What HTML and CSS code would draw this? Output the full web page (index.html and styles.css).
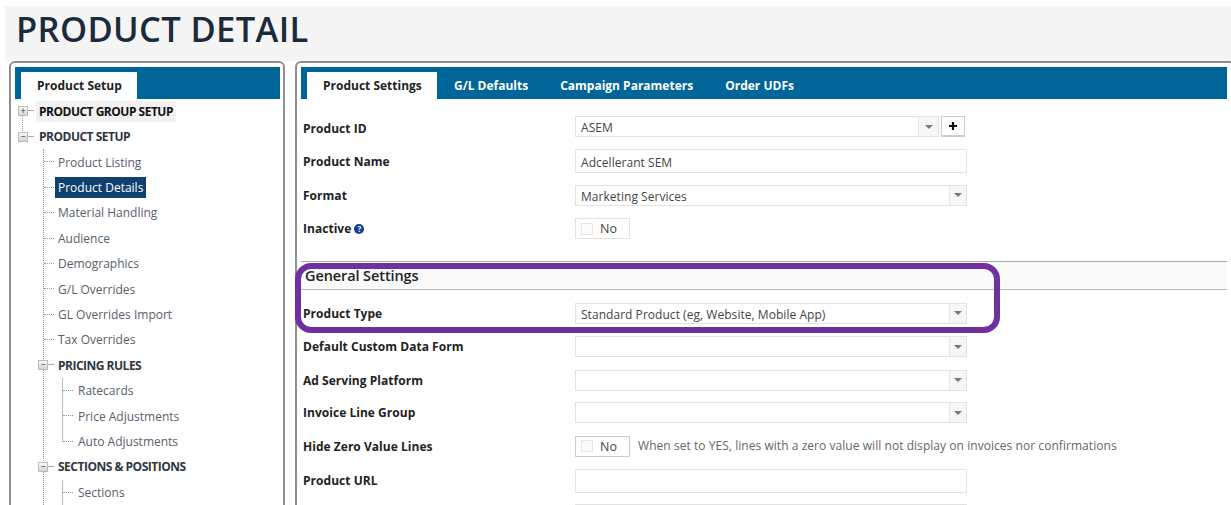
FILE: index.html
```html
<!DOCTYPE html>
<html lang="en">
<head>
<meta charset="utf-8">
<title>Product Detail</title>
<link rel="stylesheet" href="styles.css">
</head>
<body>
<div class="page">
  <header class="page-head"><h1>PRODUCT DETAIL</h1></header>
  <div class="columns">
    <aside class="panel side">
      <div class="tabbar"><span class="tab active side-tab">Product Setup</span></div>
      <ul class="tree root">
        <li class="node head hover"><span class="exp">+</span><span class="lbl">PRODUCT GROUP SETUP</span></li>
        <li class="node head"><span class="exp">−</span><span class="lbl">PRODUCT SETUP</span></li>
        <li>
          <ul class="tree level1">
            <li class="node leaf"><span class="lbl">Product Listing</span></li>
            <li class="node leaf"><span class="lbl selected">Product Details</span></li>
            <li class="node leaf"><span class="lbl">Material Handling</span></li>
            <li class="node leaf"><span class="lbl">Audience</span></li>
            <li class="node leaf"><span class="lbl">Demographics</span></li>
            <li class="node leaf"><span class="lbl">G/L Overrides</span></li>
            <li class="node leaf"><span class="lbl">GL Overrides Import</span></li>
            <li class="node leaf"><span class="lbl">Tax Overrides</span></li>
            <li class="node head sub"><span class="exp">−</span><span class="lbl">PRICING RULES</span></li>
            <li>
              <ul class="tree level2">
                <li class="node leaf"><span class="lbl">Ratecards</span></li>
                <li class="node leaf"><span class="lbl">Price Adjustments</span></li>
                <li class="node leaf"><span class="lbl">Auto Adjustments</span></li>
              </ul>
            </li>
            <li class="node head sub"><span class="exp">−</span><span class="lbl">SECTIONS &amp; POSITIONS</span></li>
            <li>
              <ul class="tree level2">
                <li class="node leaf"><span class="lbl">Sections</span></li>
              </ul>
            </li>
          </ul>
        </li>
      </ul>
    </aside>
    <main class="panel content">
      <div class="tabbar">
        <span class="tab active">Product Settings</span>
        <span class="tab">G/L Defaults</span>
        <span class="tab">Campaign Parameters</span>
        <span class="tab">Order UDFs</span>
      </div>
      <div class="form">
        <div class="row r-id">
          <label>Product ID</label>
          <div class="combo short"><span class="val">ASEM</span><span class="arrow"></span></div>
          <button class="plus" type="button" aria-label="Add">
            <svg width="10" height="10" viewBox="0 0 10 10"><path d="M5 1v8M1 5h8" stroke="#111" stroke-width="2.2" fill="none"/></svg>
          </button>
        </div>
        <div class="row r-name"><label>Product Name</label><div class="text-input"><span class="val">Adcellerant SEM</span></div></div>
        <div class="row r-format"><label>Format</label><div class="combo"><span class="val">Marketing Services</span><span class="arrow"></span></div></div>
        <div class="row r-inactive">
          <label>Inactive <span class="help">?</span></label>
          <div class="toggle"><span class="box"></span><span>No</span></div>
        </div>
        <div class="section">General Settings</div>
        <div class="row r-type"><label>Product Type</label><div class="combo"><span class="val">Standard Product (eg, Website, Mobile App)</span><span class="arrow"></span></div></div>
        <div class="row r-default"><label>Default Custom Data Form</label><div class="combo"><span class="val"></span><span class="arrow"></span></div></div>
        <div class="row r-ad"><label>Ad Serving Platform</label><div class="combo"><span class="val"></span><span class="arrow"></span></div></div>
        <div class="row r-invoice"><label>Invoice Line Group</label><div class="combo"><span class="val"></span><span class="arrow"></span></div></div>
        <div class="row r-hide">
          <label>Hide Zero Value Lines</label>
          <div class="toggle strong"><span class="box"></span><span>No</span></div>
          <span class="hint">When set to YES, lines with a zero value will not display on invoices nor confirmations</span>
        </div>
        <div class="row r-url"><label>Product URL</label><div class="text-input"></div></div>
        <div class="row r-more"><label></label><div class="text-input"></div></div>
      </div>
    </main>
  </div>
  <div class="callout"></div>
</div>
</body>
</html>
```
FILE: styles.css
```css
* { box-sizing: border-box; }
html, body { margin: 0; height: 505px; overflow: hidden; background: #fff; }
body { font-family: "Open Sans", "Noto Sans", sans-serif; font-size: 12px; color: #444; }
.page { position: relative; height: 505px; overflow: hidden; padding: 6px 0 0 5px; }

.page-head { height: 55px; background: #f5f5f5; }
.page-head h1 { margin: 0; padding: 4px 0 0 11px; font-size: 34.5px; line-height: 38px; font-weight: 600; color: #1c2b3c; letter-spacing: .35px; }

.columns { display: flex; gap: 10px; padding-left: 4px; height: 500px; }
.panel { background: #fff; border: 2px solid #8f8f8f; border-radius: 6px; padding: 4px; flex: none; }
.side { width: 276px; }
.content { width: 940px; border-right: 0; padding-right: 0; }

.tabbar { display: flex; height: 32px; background: #006699; padding: 5px 0 0 6px; width: 926px; }
.side .tabbar { width: 265px; }
.tab { padding: 0 16px; line-height: 27px; font-size: 12px; font-weight: 700; color: #fff; white-space: nowrap; }
.tab.active { background: #fff; color: #222; width: 130px; margin-right: 1px; }
.tab.side-tab { width: 116px; }

/* Tree */
.tree { list-style: none; margin: 0; padding: 0; }
.root { padding-left: 3px; margin-top: -.3px; }
.node { display: flex; align-items: center; height: 25.4px; position: relative; }
.lbl { padding: 0 3px; line-height: 21px; white-space: nowrap; color: #56606a; }
.head .lbl { font-weight: 700; color: #2f3640; letter-spacing: -.5px; }
.hover .lbl { background: #f1f1f1; color: #111; }
.selected { background: #10406f; color: #fff; }
.exp { width: 10px; height: 10px; margin-right: 8px; border: 1px solid #bbb; background: linear-gradient(#fafafa, #d4d4d4); font-size: 9px; line-height: 8px; text-align: center; color: #333; flex: none; position: relative; }
.exp::after { content: ""; position: absolute; left: 9px; top: 3px; width: 6px; border-top: 1px solid #aaa; }
.root > .hover::before { content: ""; position: absolute; left: 4px; top: 17px; height: 17px; border-left: 1px dotted #999; }
.level1 { margin-left: 25px; border-left: 1px dotted #999; }
.level1 > .leaf { padding-left: 11px; }
.leaf::before { content: ""; position: absolute; left: 0; top: 12px; width: 10px; border-top: 1px dotted #999; }
.sub { margin-left: -6px; }
.sub .exp { margin-right: 7px; }
.level2 { margin-left: 18px; position: relative; }
.level2::before { content: ""; position: absolute; left: 0; top: 0; height: 64px; border-left: 1px solid #bbb; }
.level2 > .leaf { padding-left: 13px; }
.level2 > .leaf::before { left: 1px; }

/* Form */
.form { padding-left: 2px; width: 926px; }
.row { display: flex; align-items: center; height: 33px; }
.row label { width: 272px; flex: none; font-weight: 700; color: #222; letter-spacing: .03px; white-space: nowrap; }
.r-id { margin-top: 11px; }
.r-id label { padding-top: 3px; }
.r-name { height: 36px; }
.r-format { height: 32px; }
.r-inactive { height: 35px; }
.r-type { margin-top: 6.5px; }
.r-default { height: 34px; }
.r-invoice { height: 32px; }
.r-hide { height: 35px; }
.r-url { height: 34px; }
.r-more { height: 36px; }
.val { flex: 1; padding: 2px 0 0 5px; color: #444; letter-spacing: .04px; white-space: nowrap; }
.combo, .text-input { display: flex; align-items: center; width: 392px; height: 21px; border: 1px solid #e2e2e2; background: #fff; flex: none; }
.text-input { height: 24px; }
.combo.short { width: 364px; }
.arrow { width: 17px; height: 100%; flex: none; background: #f6f6f6; border-left: 1px solid #e8e8e8; display: flex; align-items: center; justify-content: center; }
.short .arrow { width: 20px; }
.arrow::before { content: ""; border-left: 4px solid transparent; border-right: 4px solid transparent; border-top: 4px solid #777; }
.plus { width: 24px; height: 21px; margin-left: 2px; border: 1px solid #ccc; border-bottom-width: 2px; background: #fff; padding: 0; display: flex; align-items: center; justify-content: center; }
.toggle { display: flex; align-items: center; gap: 7px; width: 55px; height: 21px; border: 1px solid #e2e2e2; padding-left: 5px; color: #444; font-size: 12.5px; flex: none; }
.toggle.strong { border-color: #ccc; }
.box { width: 12px; height: 12px; border: 1px solid #e6e6e6; background: #fbfbfb; }
.help { display: inline-block; width: 10px; height: 10px; border-radius: 50%; background: #0b3f96; color: #fff; font-size: 8px; line-height: 10px; text-align: center; vertical-align: 1px; }
.hint { margin-left: 8px; color: #666; letter-spacing: .05px; white-space: nowrap; padding-bottom: 2px; }
.section { height: 29px; margin: 15px 0 0 -2px; border-top: 1px solid #aaa; border-bottom: 1px solid #bbb; background: #f9f9f9; padding-left: 4px; font-size: 14.5px; font-weight: 600; color: #222; line-height: 28px; letter-spacing: -.1px; }

/* Highlight drawn over the form */
.callout { position: absolute; left: 295px; top: 263px; width: 705px; height: 70px; border: 6px solid #7030a0; border-radius: 16px; pointer-events: none; }
```
